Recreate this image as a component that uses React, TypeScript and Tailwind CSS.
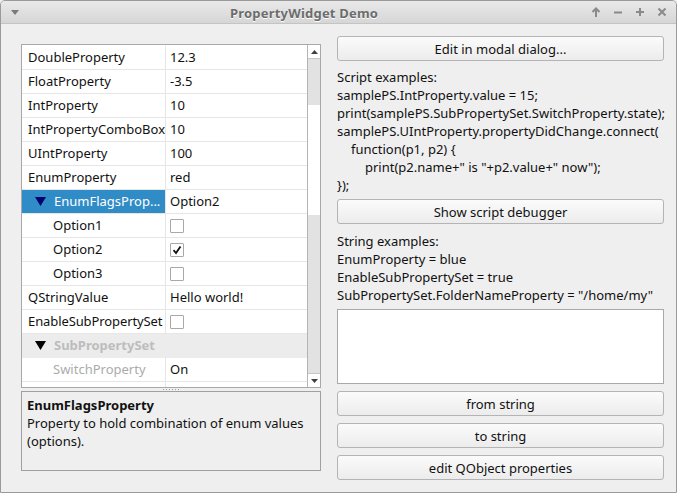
import type { ReactNode } from 'react';

const font = { fontFamily: '"Noto Sans", "Open Sans", sans-serif' };

const Tri = ({ color }: { color: string }) => (
    <svg width="11" height="9" viewBox="0 0 11 9" className="shrink-0">
        <polygon points="0,0 11,0 5.5,9" fill={color} />
    </svg>
);

const Checkbox = ({ checked = false }: { checked?: boolean }) => (
    <div className="w-[14px] h-[14px] border border-[#a8a8a8] bg-white rounded-[1px] flex items-center justify-center">
        {checked && (
            <svg width="10" height="10" viewBox="0 0 10 10">
                <path d="M1.5 5.2 L4 8 L8.5 1.5" stroke="#111" strokeWidth="1.8" fill="none" />
            </svg>
        )}
    </div>
);

type RowProps = {
    name: ReactNode;
    value?: ReactNode;
    nameClass?: string;
    rowClass?: string;
    valueClass?: string;
};

const Row = ({ name, value, nameClass = 'pl-[6px]', rowClass = '', valueClass = '' }: RowProps) => (
    <div className={`flex h-[24px] shrink-0 border-b border-[#e6e6e6] ${rowClass}`}>
        <div className={`w-[144px] shrink-0 border-r border-[#e6e6e6] flex items-center whitespace-nowrap overflow-hidden ${nameClass}`}>
            {name}
        </div>
        <div className={`flex-1 flex items-center pl-[4px] whitespace-nowrap ${valueClass}`}>{value}</div>
    </div>
);

const Button = ({ children }: { children: ReactNode }) => (
    <div className="h-[25px] shrink-0 rounded-[3px] border border-[#b4b4b4] bg-gradient-to-b from-[#fbfbfb] to-[#ececec] flex items-center justify-center text-[13px] text-[#111]">
        {children}
    </div>
);

export default function App() {
    return (
        <div className="w-[677px] h-[493px] bg-[#efefef] text-[#111] overflow-hidden" style={font}>
            <div className="w-full h-full flex flex-col border border-[#9a9a9a] rounded-t-[5px] overflow-hidden">
                {/* Title bar */}
                <div className="h-[23px] shrink-0 relative flex items-center bg-gradient-to-b from-[#e9e9e9] to-[#d6d6d6] border-b border-[#c4c4c4]">
                    <svg width="8" height="5" viewBox="0 0 8 5" className="ml-[10px]">
                        <polygon points="0,0 8,0 4,5" fill="#7a7a7a" />
                    </svg>
                    <div className="absolute left-[229px] top-[3px] text-[13px] font-bold text-[#6c6c6c] [text-shadow:0_1px_0_#ffffff] tracking-[0.2px]">
                        PropertyWidget Demo
                    </div>
                    <div className="ml-auto mr-[9px] flex items-center gap-[12px]">
                        <svg width="10" height="10" viewBox="0 0 10 10">
                            <path d="M5 10 V2 M1.5 5 L5 1.5 L8.5 5" stroke="#8a8a8a" strokeWidth="2" fill="none" />
                        </svg>
                        <svg width="10" height="10" viewBox="0 0 10 10">
                            <path d="M1 5.5 H9" stroke="#8a8a8a" strokeWidth="2" fill="none" />
                        </svg>
                        <svg width="10" height="10" viewBox="0 0 10 10">
                            <path d="M1 5 H9 M5 1 V9" stroke="#8a8a8a" strokeWidth="2" fill="none" />
                        </svg>
                        <svg width="10" height="10" viewBox="0 0 10 10">
                            <path d="M1.5 1.5 L8.5 8.5 M8.5 1.5 L1.5 8.5" stroke="#8a8a8a" strokeWidth="2" fill="none" />
                        </svg>
                    </div>
                </div>

                {/* Body */}
                <div className="flex-1 flex items-start pl-[20px]">
                    {/* Left column */}
                    <div className="w-[300px] mt-[20px] flex flex-col">
                        <div className="h-[344px] border border-[#a8a8a8] bg-white flex text-[13px]">
                            <div className="w-[285px] pt-[1px] flex flex-col overflow-hidden">
                                <Row name="DoubleProperty" value="12.3" />
                                <Row name="FloatProperty" value="-3.5" />
                                <Row name="IntProperty" value="10" />
                                <Row name="IntPropertyComboBox" value="10" />
                                <Row name="UIntProperty" value="100" />
                                <Row name="EnumProperty" value="red" />
                                <Row
                                    name={
                                        <>
                                            <Tri color="#00006e" />
                                            <span className="ml-[8px] text-white">EnumFlagsProp...</span>
                                        </>
                                    }
                                    nameClass="pl-[13px] bg-[#308cc6]"
                                    value="Option2"
                                />
                                <Row name="Option1" nameClass="pl-[31px]" value={<Checkbox />} />
                                <Row name="Option2" nameClass="pl-[31px]" value={<Checkbox checked />} />
                                <Row name="Option3" nameClass="pl-[31px]" value={<Checkbox />} />
                                <Row name="QStringValue" value="Hello world!" />
                                <Row name="EnableSubPropertySet" nameClass="pl-[6px] tracking-[-0.1px]" value={<Checkbox />} />
                                <Row
                                    name={
                                        <>
                                            <Tri color="#000000" />
                                            <span className="ml-[8px] font-bold text-[#bdbdbd]">SubPropertySet</span>
                                        </>
                                    }
                                    nameClass="pl-[13px] !border-r-0"
                                    rowClass="bg-[#ececec] !border-b-[#ececec]"
                                />
                                <Row name={<span className="text-[#ababab]">SwitchProperty</span>} nameClass="pl-[31px]" value="On" />
                                <Row name="" value="" />
                            </div>
                            {/* Scrollbar */}
                            <div className="w-[13px] border-l border-[#b4b4b4] flex flex-col">
                                <div className="h-[13px] bg-white flex items-center justify-center">
                                    <svg width="7" height="4" viewBox="0 0 7 4">
                                        <polygon points="0,4 7,4 3.5,0" fill="#404040" />
                                    </svg>
                                </div>
                                <div className="h-[47px] bg-[#e2e2e2] border-t border-[#c8c8c8]" />
                                <div className="h-[110px] bg-white" />
                                <div className="flex-1 bg-[#e2e2e2]" />
                                <div className="h-[14px] bg-white border-t border-[#c8c8c8] flex items-center justify-center">
                                    <svg width="7" height="4" viewBox="0 0 7 4">
                                        <polygon points="0,0 7,0 3.5,4" fill="#404040" />
                                    </svg>
                                </div>
                            </div>
                        </div>
                        {/* Splitter handle */}
                        <div className="h-[3px] flex items-center justify-center">
                            <div className="flex gap-[2px]">
                                {[0, 1, 2, 3, 4, 5].map((i) => (
                                    <div key={i} className="w-[1px] h-[1px] bg-[#9a9a9a]" />
                                ))}
                            </div>
                        </div>
                        {/* Description */}
                        <div className="h-[80px] border border-[#a0a0a0] px-[5px] pt-[4px] text-[13px] leading-[18px]">
                            <div className="font-bold">EnumFlagsProperty</div>
                            <div>Property to hold combination of enum values (options).</div>
                        </div>
                    </div>

                    {/* Right column */}
                    <div className="w-[327px] ml-[16px] mt-[12px] flex flex-col text-[13px] leading-[18px]">
                        <Button>Edit in modal dialog...</Button>
                        <div className="mt-[7px] whitespace-nowrap">
                            <div>Script examples:</div>
                            <div>samplePS.IntProperty.value = 15;</div>
                            <div>print(samplePS.SubPropertySet.SwitchProperty.state);</div>
                            <div>samplePS.UIntProperty.propertyDidChange.connect(</div>
                            <div className="pl-[14px]">function(p1, p2) {'{'}</div>
                            <div className="pl-[28px]">print(p2.name+" is "+p2.value+" now");</div>
                            <div>{'});'}</div>
                        </div>
                        <div className="mt-[5px]">
                            <Button>Show script debugger</Button>
                        </div>
                        <div className="mt-[8px] whitespace-nowrap">
                            <div>String examples:</div>
                            <div>EnumProperty = blue</div>
                            <div>EnableSubPropertySet = true</div>
                            <div>SubPropertySet.FolderNameProperty = "/home/my"</div>
                        </div>
                        <div className="mt-[5px] h-[75px] bg-white border border-[#a8a8a8]" />
                        <div className="mt-[7px] flex flex-col gap-[7px]">
                            <Button>from string</Button>
                            <Button>to string</Button>
                            <Button>edit QObject properties</Button>
                        </div>
                    </div>
                </div>
            </div>
        </div>
    );
}
